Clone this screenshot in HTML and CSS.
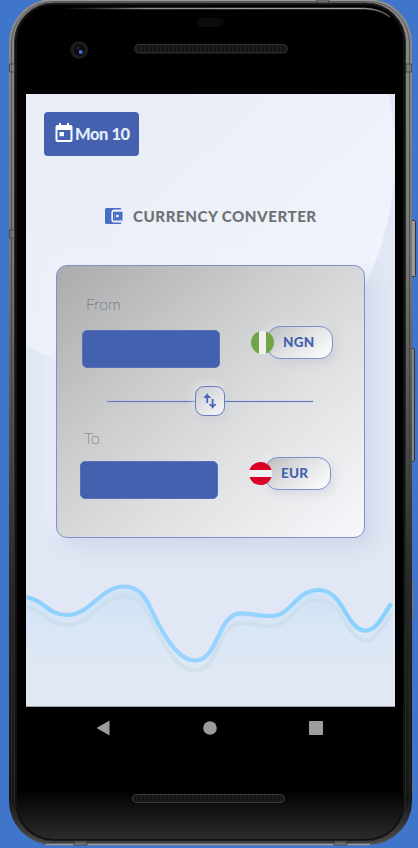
FILE: index.html
```html
<!DOCTYPE html>
<html lang="en">
<head>
<meta charset="utf-8">
<title>Currency Converter</title>
<link rel="stylesheet" href="styles.css">
</head>
<body>
<div class="stage">
  <svg class="hardware" width="418" height="848" viewBox="0 0 418 848" aria-hidden="true">
    <defs>
      <linearGradient id="metal" x1="0" y1="0" x2="0" y2="1">
        <stop offset="0" stop-color="#8b8b8b"/><stop offset=".3" stop-color="#777"/>
        <stop offset=".55" stop-color="#464646"/><stop offset=".7" stop-color="#242424"/>
        <stop offset=".95" stop-color="#141414"/><stop offset="1" stop-color="#555"/>
      </linearGradient>
      <linearGradient id="shine" x1="0" y1="0" x2="1" y2="0">
        <stop offset="0" stop-color="#889" stop-opacity="0"/><stop offset=".25" stop-color="#8b9290"/>
        <stop offset=".9" stop-color="#a0a5a4"/><stop offset="1" stop-color="#ccc" stop-opacity=".4"/>
      </linearGradient>
      <linearGradient id="chin" x1="0" y1="0" x2="0" y2="1">
        <stop offset="0" stop-color="#000"/><stop offset=".94" stop-color="#000"/>
        <stop offset="1" stop-color="#2b2b2b"/>
      </linearGradient>
      <pattern id="mesh" width="4" height="5" patternUnits="userSpaceOnUse">
        <rect width="4" height="5" fill="#141412"/><path d="M1 0v5" stroke="#211f1b" stroke-width="1.4"/>
      </pattern>
    </defs>
    <g stroke="#333" stroke-width="1">
      <rect x="409" y="220.500" width="6.500" height="56" rx="1" fill="#999"/>
      <rect x="409" y="348.500" width="5.500" height="113" rx="1" fill="#858585"/>
    </g>
    <path d="M412 580h1v40h-1zM412 783h1v7h-1z" fill="#777"/>
    <rect x="9" y="-1" width="403" height="846" rx="44" fill="url(#metal)"/>
    <path d="M42 0.500H376M46 844.500H370" stroke="#999" stroke-width="1.500"/>
    <rect x="11.500" y="1.500" width="398" height="841" rx="42" fill="none" stroke="#333" stroke-opacity=".6"/>
    <rect x="14.500" y="3" width="391" height="838" rx="39" fill="#111" stroke="#292929"/>
    <rect x="17" y="5" width="386" height="834" rx="37" fill="url(#chin)"/>
    <path d="M63 8.500H365Q380 9 390 17" fill="none" stroke="url(#shine)" stroke-width="1.300"/>
    <path d="M9.500 64h5v8h-5zM406 64h5.500v8H406zM9.500 230h5v8h-5zM317 0h12v3h-12zM74 841h13v4H74zM334 841h13v4h-13z" fill="#777" stroke="#333" stroke-width=".7" fill-opacity=".5"/>
    <rect x="197" y="18" width="27" height="9" rx="4.500" fill="#0a0c0c"/>
    <circle cx="79.200" cy="50" r="9" fill="#1d1b1b"/><circle cx="79.200" cy="50" r="5.500" fill="#0b0b14"/>
    <circle cx="80.700" cy="52" r="2" fill="#526bd2"/><circle cx="78" cy="48" r="1" fill="#273a84"/>
    <rect x="134.500" y="44.500" width="153" height="8.500" rx="4.250" fill="url(#mesh)" stroke="#333"/>
    <rect x="132.500" y="794.500" width="152" height="8" rx="4" fill="url(#mesh)" stroke="#3a3c3a"/>
  </svg>

  <main class="screen">
    <svg class="backdrop" width="369" height="612" viewBox="26 94 369 612" aria-hidden="true">
      <defs>
        <linearGradient id="orb" gradientUnits="userSpaceOnUse" x1="120" y1="150" x2="300" y2="350">
          <stop offset="0" stop-color="#e9eef7"/><stop offset="1" stop-color="#f1f4fc"/>
        </linearGradient>
        <linearGradient id="water" gradientUnits="userSpaceOnUse" x1="0" y1="586" x2="0" y2="675">
          <stop offset="0" stop-color="#cee2f6"/><stop offset=".55" stop-color="#dae7f5"/>
          <stop offset="1" stop-color="#e1e7f4"/>
        </linearGradient>
        <linearGradient id="crest" x1="0" y1="0" x2="1" y2="0">
          <stop offset="0" stop-color="#8ed0ff"/><stop offset=".45" stop-color="#99d4ff"/><stop offset="1" stop-color="#86d2fd"/>
        </linearGradient>
        <path id="wave" d="M24 597C45 599 47 615 67 615C91 615 100 586.500 124 586.500C145 586.500 149 607 160 627C171 647 182 660.500 195 660.500C219 660.500 217 613.300 241 613.300C250 613.300 260 616 271 616C292 616 295 590 319 590C344 590 346 630.700 366 630.700C377 630.700 384 613 391.500 603.500"/>
      </defs>
      <path d="M26 94H389C402 160 394 222 367 282C310 400 150 400 56 360L26 346Z" fill="url(#orb)"/>
      <path d="M24 597C45 599 47 615 67 615C91 615 100 586.500 124 586.500C145 586.500 149 607 160 627C171 647 182 660.500 195 660.500C219 660.500 217 613.300 241 613.300C250 613.300 260 616 271 616C292 616 295 590 319 590C344 590 346 630.700 366 630.700C377 630.700 384 613 391.500 603.500V706H24Z" fill="url(#water)"/>
      <use href="#wave" y="10" fill="none" stroke="#cbdbe8" stroke-opacity=".65" stroke-width="4"/>
      <use href="#wave" fill="none" stroke="url(#crest)" stroke-width="4.200"/>
    </svg>

    <div class="date">
      <svg width="18" height="20" viewBox="0 0 18 20" aria-hidden="true"><path fill="#fff" fill-rule="evenodd" d="M4 0h2v2h6V0h2v2h1.500A2 2 0 0 1 17.500 4v13a2 2 0 0 1-2 2h-13a2 2 0 0 1-2-2V4a2 2 0 0 1 2-2H4ZM2.500 7v10h13V7ZM4.500 9h4.500v4.300H4.500Z"/></svg>
      <span>Mon 10</span>
    </div>

    <h1 class="title">
      <svg width="18" height="17" viewBox="0 0 18 17" aria-hidden="true"><path fill="#476fc5" d="M1.500 0H15a1.500 1.500 0 0 1 1.500 1.500H9A2.700 2.700 0 0 0 6.300 4v8A2.700 2.700 0 0 0 9 14.500h7.500A1.500 1.500 0 0 1 15 16H1.500A1.500 1.500 0 0 1 0 14.500v-13A1.500 1.500 0 0 1 1.500 0Z"/><path fill="#476fc5" fill-rule="evenodd" d="M8 3.700h9.500v8.700H8ZM9.700 5.300v5.500h6.300V5.300Z"/><path fill="#476fc5" fill-rule="evenodd" d="M9.500 5h7v6h-7ZM11 6.700v2.600h2.600V6.700Z"/></svg>
      <span>CURRENCY CONVERTER</span>
    </h1>

    <section class="card">
      <div class="label from-label">From</div>
      <div class="row from-row">
        <div class="amount"></div>
        <div class="currency"><i class="flag nigeria"></i><span class="pill">NGN</span></div>
      </div>
      <div class="swap">
        <span class="rule"></span>
        <span class="swap-button"><svg width="14" height="16" viewBox="0 0 14 16" aria-hidden="true"><path d="M4.200 10V2.500M1 4.700Q3 4.100 4.200 1.900Q5.400 4.100 7.400 4.700M9.600 6V13.500M6.400 11.300Q8.400 11.900 9.600 14.100Q10.800 11.900 12.800 11.300" fill="none" stroke="#4866b8" stroke-width="1.800"/></svg></span>
        <span class="rule"></span>
      </div>
      <div class="label to-label">To</div>
      <div class="row to-row">
        <div class="amount"></div>
        <div class="currency"><i class="flag austria"></i><span class="pill">EUR</span></div>
      </div>
    </section>
  </main>

  <nav class="navbar">
    <svg width="14" height="16" viewBox="0 0 14 16"><path d="M.5 8L13.500 .5V15.500Z" fill="#9c9c9c"/></svg>
    <svg width="14" height="14" viewBox="0 0 14 14"><circle cx="7" cy="7" r="6.800" fill="#9c9c9c"/></svg>
    <svg width="14" height="14" viewBox="0 0 14 14"><rect width="14" height="14" rx=".7" fill="#9c9c9c"/></svg>
  </nav>
</div>
</body>
</html>
```
FILE: styles.css
```css
* { box-sizing: border-box; }
body { margin: 0; background: #4075cc; font-family: Lato, "Liberation Sans", sans-serif; }
svg { display: block; flex: none; }
.stage { position: relative; width: 418px; height: 848px; padding: 94px 23px 0 26px; overflow: hidden; }
.hardware, .backdrop { position: absolute; left: 0; top: 0; }

.screen { position: relative; width: 369px; height: 613px; padding: 18px; background: #e1e7f4; border-bottom: 1px solid #9da2aa; overflow: hidden; }
.date {
  position: relative; display: flex; align-items: center; gap: 2px;
  width: 95px; height: 44px; padding-left: 11px; border-radius: 4px;
  background: #4361af; color: #e4ebf8; font-size: 16.5px; font-weight: 900; letter-spacing: -.45px; white-space: nowrap;
}
.date svg { margin-top: -2px; }
.date span { margin-top: -1px; }
.title {
  position: relative; display: flex; align-items: center; gap: 10px;
  height: 20px; margin: 50px 0 0 61px;
  color: #707173; font-size: 15.2px; font-weight: 900; letter-spacing: .48px; white-space: nowrap;
}

.card {
  position: relative; width: 309px; height: 273px; margin: 39px 0 0 12px; padding: 28px 29px 0 23px;
  border: 1px solid #7e93cd; border-radius: 11px;
  background: linear-gradient(138deg, #aaabad 0%, #cccdce 37%, #dfe0e1 62%, #f7f8fb 100%);
  box-shadow: 8px 9px 18px rgba(184, 194, 215, .42), -7px -7px 16px rgba(244, 248, 255, .55);
}
.label { height: 20px; color: #66696e; font-size: 16px; line-height: 20px; font-weight: 100; -webkit-text-stroke: .2px #66696e; }
.from-label { margin-left: 6px; }
.to-label { margin: 12px 0 0 4px; }
.row { display: flex; align-items: flex-start; }
.from-row { margin: 12px 0 0 1.5px; }
.to-row { margin: 9px 0 0 -.5px; }
.amount { width: 138px; height: 38px; margin-top: 4px; border-radius: 5px; background: #4361af; border: 1px solid #5670b2; }
.currency { display: flex; align-items: center; margin-left: 31.5px; }
.flag { position: relative; z-index: 1; width: 23px; height: 23px; border-radius: 50%; }
.nigeria { background: linear-gradient(90deg, #6fa544 34%, #f0f0f0 34% 66%, #6fa544 66%); }
.austria { background: linear-gradient(#d80027 34%, #f0f0f0 34% 66%, #d80027 66%); }
.pill {
  width: 66px; height: 33px; margin-left: -7px; padding-left: 15px;
  border: 1px solid #7b91cc; border-radius: 13px;
  background: linear-gradient(142deg, #bfc0c2 5%, #e0e1e3 45%, #fbfcfe 95%);
  box-shadow: 3px 4px 8px rgba(180, 187, 203, .35), -3px -3px 8px rgba(245, 246, 250, .3);
  color: #4361af; font-size: 13.5px; line-height: 31px; font-weight: 900; letter-spacing: .25px;
}
.swap { display: flex; align-items: center; width: 206px; height: 30px; margin: 18px 0 0 27px; }
.rule { flex: 1; height: 1px; background: #617bbf; box-shadow: 0 0 1px #7289c5; }
.swap-button {
  display: flex; align-items: center; justify-content: center; width: 30px; height: 30px;
  border: 1px solid #667fc3; border-radius: 9px;
  background: linear-gradient(140deg, #cbccd0, #f7f8fa);
  box-shadow: -2px -3px 7px rgba(245, 246, 248, .5), 2px 3px 6px rgba(190, 195, 207, .35);
}
.navbar { position: relative; display: flex; align-items: center; justify-content: space-between; width: 227px; height: 42px; margin-left: 70px; }
```
